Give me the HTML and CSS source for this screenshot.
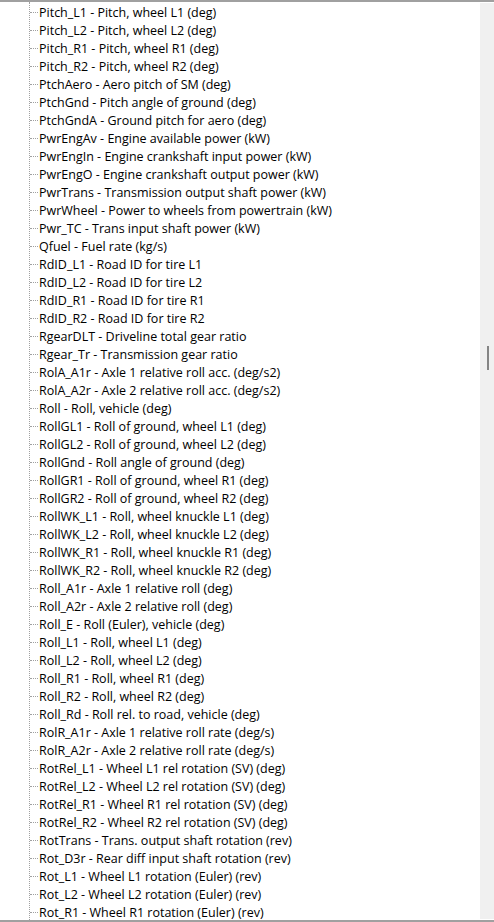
FILE: index.html
```html
<!DOCTYPE html>
<html>
<head>
<meta charset="utf-8">
<link rel="stylesheet" href="styles.css">
</head>
<body>
<div class="frame">
  <div class="tree">
    <ul class="branch">
      <li class="node">Pitch_L1 - Pitch, wheel L1 (deg)</li>
      <li class="node">Pitch_L2 - Pitch, wheel L2 (deg)</li>
      <li class="node">Pitch_R1 - Pitch, wheel R1 (deg)</li>
      <li class="node">Pitch_R2 - Pitch, wheel R2 (deg)</li>
      <li class="node">PtchAero - Aero pitch of SM (deg)</li>
      <li class="node">PtchGnd - Pitch angle of ground (deg)</li>
      <li class="node">PtchGndA - Ground pitch for aero (deg)</li>
      <li class="node">PwrEngAv - Engine available power (kW)</li>
      <li class="node">PwrEngIn - Engine crankshaft input power (kW)</li>
      <li class="node">PwrEngO - Engine crankshaft output power (kW)</li>
      <li class="node">PwrTrans - Transmission output shaft power (kW)</li>
      <li class="node">PwrWheel - Power to wheels from powertrain (kW)</li>
      <li class="node">Pwr_TC - Trans input shaft power (kW)</li>
      <li class="node">Qfuel - Fuel rate (kg/s)</li>
      <li class="node">RdID_L1 - Road ID for tire L1</li>
      <li class="node">RdID_L2 - Road ID for tire L2</li>
      <li class="node">RdID_R1 - Road ID for tire R1</li>
      <li class="node">RdID_R2 - Road ID for tire R2</li>
      <li class="node">RgearDLT - Driveline total gear ratio</li>
      <li class="node">Rgear_Tr - Transmission gear ratio</li>
      <li class="node">RolA_A1r - Axle 1 relative roll acc. (deg/s2)</li>
      <li class="node">RolA_A2r - Axle 2 relative roll acc. (deg/s2)</li>
      <li class="node">Roll - Roll, vehicle (deg)</li>
      <li class="node">RollGL1 - Roll of ground, wheel L1 (deg)</li>
      <li class="node">RollGL2 - Roll of ground, wheel L2 (deg)</li>
      <li class="node">RollGnd - Roll angle of ground (deg)</li>
      <li class="node">RollGR1 - Roll of ground, wheel R1 (deg)</li>
      <li class="node">RollGR2 - Roll of ground, wheel R2 (deg)</li>
      <li class="node">RollWK_L1 - Roll, wheel knuckle L1 (deg)</li>
      <li class="node">RollWK_L2 - Roll, wheel knuckle L2 (deg)</li>
      <li class="node">RollWK_R1 - Roll, wheel knuckle R1 (deg)</li>
      <li class="node">RollWK_R2 - Roll, wheel knuckle R2 (deg)</li>
      <li class="node">Roll_A1r - Axle 1 relative roll (deg)</li>
      <li class="node">Roll_A2r - Axle 2 relative roll (deg)</li>
      <li class="node">Roll_E - Roll (Euler), vehicle (deg)</li>
      <li class="node">Roll_L1 - Roll, wheel L1 (deg)</li>
      <li class="node">Roll_L2 - Roll, wheel L2 (deg)</li>
      <li class="node">Roll_R1 - Roll, wheel R1 (deg)</li>
      <li class="node">Roll_R2 - Roll, wheel R2 (deg)</li>
      <li class="node">Roll_Rd - Roll rel. to road, vehicle (deg)</li>
      <li class="node">RolR_A1r - Axle 1 relative roll rate (deg/s)</li>
      <li class="node">RolR_A2r - Axle 2 relative roll rate (deg/s)</li>
      <li class="node">RotRel_L1 - Wheel L1 rel rotation (SV) (deg)</li>
      <li class="node">RotRel_L2 - Wheel L2 rel rotation (SV) (deg)</li>
      <li class="node">RotRel_R1 - Wheel R1 rel rotation (SV) (deg)</li>
      <li class="node">RotRel_R2 - Wheel R2 rel rotation (SV) (deg)</li>
      <li class="node">RotTrans - Trans. output shaft rotation (rev)</li>
      <li class="node">Rot_D3r - Rear diff input shaft rotation (rev)</li>
      <li class="node">Rot_L1 - Wheel L1 rotation (Euler) (rev)</li>
      <li class="node">Rot_L2 - Wheel L2 rotation (Euler) (rev)</li>
      <li class="node">Rot_R1 - Wheel R1 rotation (Euler) (rev)</li>
    </ul>
  </div>
  <div class="scrollbar">
    <div class="thumb"></div>
  </div>
</div>
</body>
</html>
```

FILE: styles.css
```css
html, body {
  margin: 0;
  padding: 0;
  background: #ffffff;
}

.frame {
  box-sizing: border-box;
  width: 494px;
  height: 922px;
  border-top: 2px solid #a0a0a0;
  border-bottom: 2px solid #a0a0a0;
  display: flex;
  overflow: hidden;
  background: #ffffff;
}

.tree {
  flex: 1;
  overflow: hidden;
  padding-left: 29px;
}

.branch {
  list-style: none;
  margin: 0;
  padding: 1px 0 0 0;
  height: 100%;
  box-sizing: border-box;
  border-left: 1px dotted #a0a0a0;
}

.node {
  height: 18px;
  display: flex;
  align-items: center;
  white-space: nowrap;
  font-family: "Open Sans", "Noto Sans", sans-serif;
  font-size: 12.5px;
  color: #000000;
}

.node::before {
  content: "";
  width: 8px;
  margin-right: 1px;
  border-top: 1px dotted #a0a0a0;
  flex: none;
}

.scrollbar {
  width: 14px;
  margin: 1px 0;
  background: #f0f0f0;
  display: flex;
  flex-direction: column;
}

.thumb {
  width: 2px;
  height: 24px;
  margin-top: 343px;
  margin-left: 7px;
  background: #858585;
}
```
